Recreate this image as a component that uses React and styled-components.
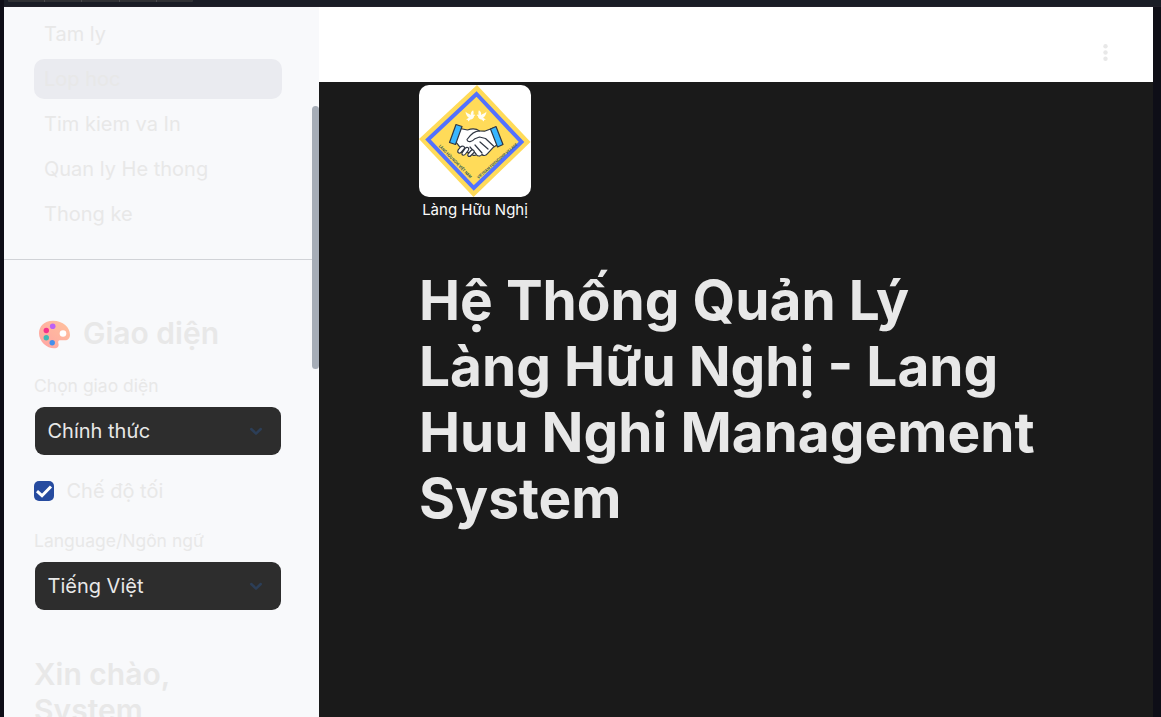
import React from 'react';
import styled, { createGlobalStyle } from 'styled-components';

const GlobalStyle = createGlobalStyle`
  * { box-sizing: border-box; }
  body {
    margin: 0;
    overflow: hidden;
    background: #0e0e17;
    font-family: Inter, "Liberation Sans", sans-serif;
    color: #e8e8e8;
  }
`;

const Window = styled.div`
  display: flex;
  flex-direction: column;
  width: 1161px;
  height: 717px;
  overflow: hidden;
`;

const BrowserBar = styled.div`
  flex: none;
  height: 7px;
  padding-left: 4px;
  background: #1a1d26;
  border-bottom: 1px solid #211f29;
  margin-left: 4px;
`;

const TabStrip = styled.div`
  display: flex;
  gap: 1px;
  width: 185px;
  height: 2px;
  border-radius: 0 0 3px 3px;
  background: #4b4b4e;
  overflow: hidden;
`;

const TabPiece = styled.span`
  flex: 1;
  background: #303134;
`;

const Page = styled.div`
  flex: 1;
  min-height: 0;
  display: flex;
  padding: 0 8px 0 4px;
`;

const Sidebar = styled.aside`
  position: relative;
  flex: none;
  width: 315px;
  background: #f8f9fb;
  overflow: hidden;
`;

const ScrollThumb = styled.div`
  position: absolute;
  top: 99px;
  right: 0;
  width: 7px;
  height: 263px;
  border-radius: 4px;
  background: #a6adb7;
`;

const Nav = styled.nav`
  display: flex;
  flex-direction: column;
  gap: 5px;
  padding: 7px 37px 25px 30px;
  border-bottom: 1px solid #d1d3d7;
`;

const NavItem = styled.a`
  height: 40px;
  padding: 0 10px;
  border-radius: 10px;
  font-size: 20px;
  line-height: 40px;
  background: ${(p) => (p.$active ? '#eaebf0' : 'transparent')};
`;

const Settings = styled.div`
  padding: 55px 37px 0 30px;
`;

const SectionTitle = styled.h2`
  display: flex;
  align-items: center;
  margin: 0;
  font-size: 30px;
  font-weight: 600;
  line-height: 36px;
`;

const Palette = styled.svg`
  width: 33px;
  height: 30px;
  margin: 3px 12px 0 4px;
`;

const Label = styled.div`
  margin-top: ${(p) => p.$top}px;
  height: 25px;
  font-size: 17.5px;
  line-height: 25px;
`;

const Select = styled.div`
  display: flex;
  align-items: center;
  justify-content: space-between;
  height: 48px;
  margin: 9px 1px 0;
  padding: 0 16px 0 12.5px;
  border-radius: 9px;
  background: #2d2d2d;
  font-size: 20px;
`;

const CheckRow = styled.label`
  display: flex;
  align-items: center;
  gap: 12.5px;
  height: 30px;
  margin-top: 21px;
  font-size: 20px;
`;

const CheckBox = styled.span`
  display: flex;
  width: 20px;
  height: 20px;
  border-radius: 5px;
  background: #264b9f;
`;

const Greeting = styled.div`
  margin-top: 46px;
`;

const Main = styled.main`
  flex: 1;
  min-width: 0;
  background: #1a1a1a;
`;

const Header = styled.header`
  display: flex;
  justify-content: flex-end;
  height: 75px;
  padding: 35px 44px 0 0;
  background: #ffffff;
`;

const Content = styled.div`
  padding: 3px 100px 0;
`;

const Brand = styled.figure`
  width: 112px;
  margin: 0;
`;

const Logo = styled.svg`
  display: block;
  width: 112px;
  height: 112px;
  border-radius: 10px;
  background: #fff;
`;

const Caption = styled.figcaption`
  margin-top: 3px;
  font-size: 15px;
  line-height: 20px;
  text-align: center;
  white-space: nowrap;
  color: #fafafa;
`;

const Title = styled.h1`
  margin: 47px 0 0;
  font-size: 55px;
  font-weight: 700;
  line-height: 66px;
  white-space: nowrap;
`;

const navItems = ['Tam ly', 'Lop hoc', 'Tim kiem va In', 'Quan ly He thong', 'Thong ke'];
const titleLines = ['Hệ Thống Quản Lý', 'Làng Hữu Nghị - Lang', 'Huu Nghi Management', 'System'];

const Chevron = () => (
  <svg width="18" height="18" viewBox="0 0 18 18" fill="none">
    <path d="M4.200 7 9 11.600l4.800-4.600" stroke="#2c3e57" strokeWidth="2.500" strokeLinecap="round" strokeLinejoin="round" />
  </svg>
);

const Dove = (props) => (
  <path
    d="M0 .5C1.200 2 2.600 2.600 4.600 3.400L5.400 4C5 2.200 5.600.6 7.600-.8c.8 1.800.6 3.400 0 4.800.8-.6 1.600-.6 2.200.2L8.600 5C8.400 7.200 7 8.400 5 8.400L2.600 10.600 2.400 9 .6 8.600 3.400 6.800C1.600 5.800.2 3.400 0 .5Z"
    fill="#fffdf3"
    {...props}
  />
);

const VillageLogo = () => (
  <Logo viewBox="0 0 112 112">
    <path d="M58 0 111.500 57 54.500 112 0 54Z" fill="#ffdb59" />
    <path d="M57.500 9 102.500 57 54.800 103 9 54.500Z" fill="none" stroke="#5271ff" strokeWidth="4" />
    <Dove transform="translate(46.500 26)" />
    <Dove transform="translate(67.500 26) scale(-1 1)" />
    <g stroke="#303743" strokeWidth="1.200" strokeLinejoin="round" strokeLinecap="round">
      <path d="m41 43.500 7.500 1.500c4-1.500 8.500-1.700 12 1l5 .2 8-3 5.500 16-4.500 3-6 6.500c-2 2.500-4.500 2-5.500.8-1.500 2.200-4.500 1.800-5.500.2-2.500 1.500-5 .2-5.500-1.500l-4-1-3-3-4.500-2.500-3.500-4.500-3.500-1.500Z" fill="#fff" />
      <path d="M60.500 46c-5 0-8 2.500-12.500 8.500.5 3.500 5 2.500 8-.8l4.500-1.700 6 1.500 8 7.500M61 57l8 7M56 60l7 8M51 62l6 7" fill="none" />
      <path d="m41.500 62-2.500 3.200c-1 3 2 3.800 3.300 2l3-3.500c1-2.500-2-3.500-3.800-1.700Zm5 1-3.500 5c-.5 2.500 2 3 3.500 1l3-4c1-2.200-1.500-3.600-3-2Zm5.500 2.500-3 3.500c-1 2.500 1.500 3.200 3 1.500l3-3c1-2-1.500-3.300-3-2Z" fill="#fff" />
      <path d="m37 39.500 6 2-6.500 18-6-2Z" fill="#38b6ff" />
      <path d="m71.500 44 5.500-2.500 7 18-5.500 2.500Z" fill="#38b6ff" />
    </g>
    <g fill="#355e5b" fontSize="4" fontWeight="700" fontFamily="Inter, sans-serif">
      <text transform="translate(19.500 61.500) rotate(45.500)" textLength="45" lengthAdjust="spacingAndGlyphs">LÀNG HỮU NGHỊ VIỆT NAM</text>
      <text transform="translate(59.500 94) rotate(-41)" textLength="52" lengthAdjust="spacingAndGlyphs">VIETNAM FRIENDSHIP VILLAGE</text>
    </g>
  </Logo>
);

export default function App() {
  return (
    <Window>
      <GlobalStyle />
      <BrowserBar>
        <TabStrip>
          {[0, 1, 2, 3, 4].map((n) => <TabPiece key={n} />)}
        </TabStrip>
      </BrowserBar>
      <Page>
        <Sidebar>
          <Nav>
            {navItems.map((name) => (
              <NavItem key={name} $active={name === 'Lop hoc'}>{name}</NavItem>
            ))}
          </Nav>
          <Settings>
            <SectionTitle>
              <Palette viewBox="0 0 33 30">
                <defs>
                  <linearGradient id="paint" x1="0" y1="1" x2="1" y2="0">
                    <stop offset="0" stopColor="#ffa4a4" />
                    <stop offset="1" stopColor="#ffc29c" />
                  </linearGradient>
                </defs>
                <path
                  fill="url(#paint)"
                  d="M15 .8C6 .8 1 6.500 1 13.200 1 21.500 9 28.300 16 28.300c4 0 5-2 4.500-4.500-.5-2-.5-3.500 2-3.500H27c3 0 5-2 5-5.500C32 7.300 25 .8 15 .8Z"
                />
                <circle cx="25" cy="13.500" r="3.300" fill="#fff" />
                <circle cx="14.700" cy="6.200" r="2.800" fill="#bd60f5" />
                <circle cx="8.300" cy="10.500" r="2.700" fill="#f5318c" />
                <circle cx="8.300" cy="17.700" r="2.700" fill="#41b9b5" />
                <circle cx="14.200" cy="22.700" r="2.700" fill="#448fec" />
              </Palette>
              Giao diện
            </SectionTitle>
            <Label $top={22}>Chọn giao diện</Label>
            <Select>Chính thức<Chevron /></Select>
            <CheckRow>
              <CheckBox>
                <svg width="20" height="20" viewBox="0 0 20 20" fill="none">
                  <path d="m3 10.200 5 4.500L17 5.500" stroke="#fff" strokeWidth="3" />
                </svg>
              </CheckBox>
              Chế độ tối
            </CheckRow>
            <Label $top={22}>Language/Ngôn ngữ</Label>
            <Select>Tiếng Việt<Chevron /></Select>
            <Greeting>
              <SectionTitle>Xin chào,</SectionTitle>
              <SectionTitle>System</SectionTitle>
            </Greeting>
          </Settings>
          <ScrollThumb />
        </Sidebar>
        <Main>
          <Header>
            <svg width="8" height="20" viewBox="0 0 8 20" fill="#e8e8e8">
              <circle cx="4.500" cy="4.300" r="2.200" />
              <circle cx="4.500" cy="10.500" r="2.200" />
              <circle cx="4.500" cy="16.700" r="2.200" />
            </svg>
          </Header>
          <Content>
            <Brand>
              <VillageLogo />
              <Caption>Làng Hữu Nghị</Caption>
            </Brand>
            <Title>
              {titleLines.map((line) => <div key={line}>{line}</div>)}
            </Title>
          </Content>
        </Main>
      </Page>
    </Window>
  );
}
